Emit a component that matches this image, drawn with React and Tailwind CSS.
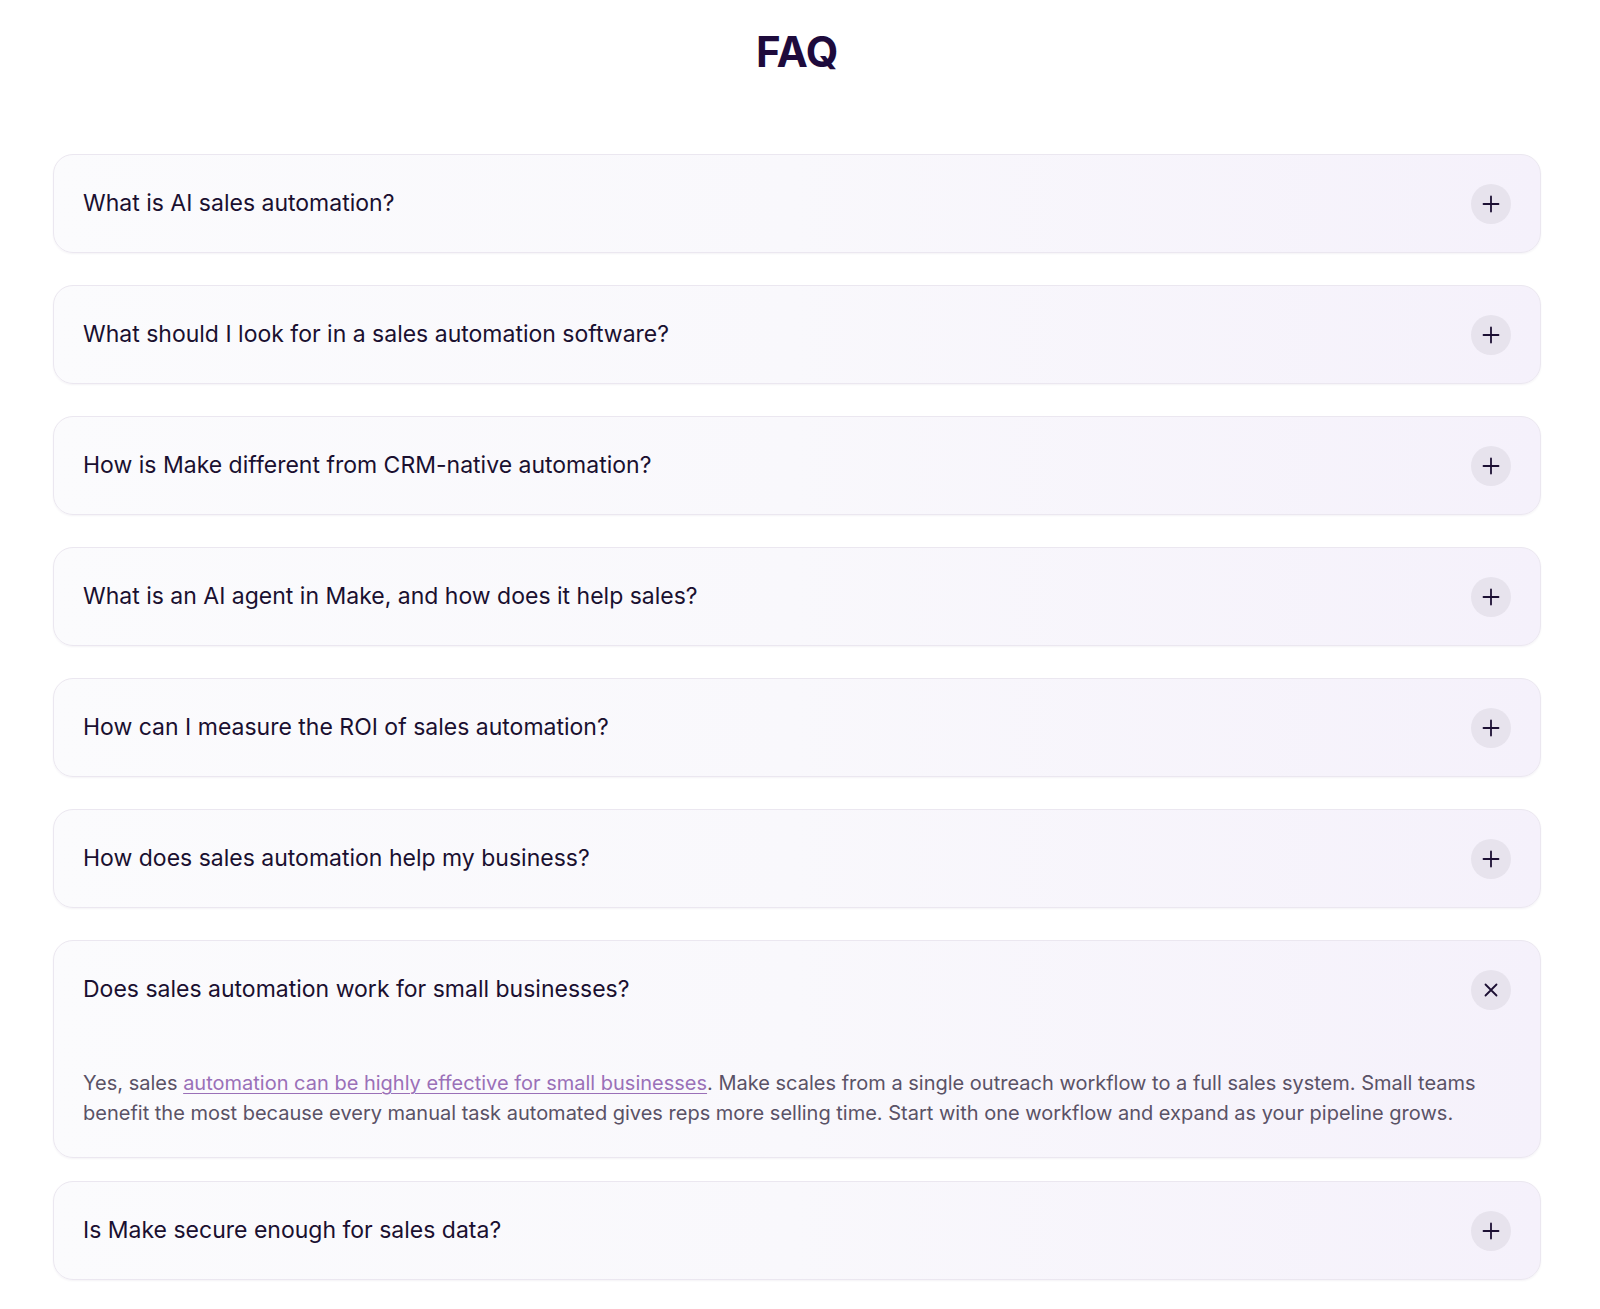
import React from "react";

const faqs = [
  { q: "What is AI sales automation?" },
  { q: "What should I look for in a sales automation software?" },
  { q: "How is Make different from CRM-native automation?" },
  { q: "What is an AI agent in Make, and how does it help sales?" },
  { q: "How can I measure the ROI of sales automation?" },
  { q: "How does sales automation help my business?" },
  { q: "Does sales automation work for small businesses?", open: true },
  { q: "Is Make secure enough for sales data?" },
];

function PlusIcon() {
  return (
    <svg width="18" height="18" viewBox="0 0 18 18" fill="none">
      <path d="M9 1.5V16.5M1.5 9H16.5" stroke="#1c0f33" strokeWidth="1.8" strokeLinecap="round" />
    </svg>
  );
}

function CloseIcon() {
  return (
    <svg width="14" height="14" viewBox="0 0 14 14" fill="none">
      <path d="M1.5 1.5L12.5 12.5M12.5 1.5L1.5 12.5" stroke="#1c0f33" strokeWidth="1.8" strokeLinecap="round" />
    </svg>
  );
}

function FaqItem({ q, open, className }) {
  return (
    <div
      className={
        "rounded-[20px] border border-[#ebe7f0] bg-gradient-to-r from-[#fbfbfd] via-[#f9f8fc] to-[#f5f1fb] shadow-[0_1px_2px_rgba(40,20,70,0.05)] " +
        (className || "")
      }
    >
      <div className="flex h-[97px] items-center justify-between px-[29px]">
        <span className="text-[23px] font-normal text-[#1a1030]">{q}</span>
        <span className="flex h-[40px] w-[40px] items-center justify-center rounded-full bg-[#e7e3ed]">
          {open ? <CloseIcon /> : <PlusIcon />}
        </span>
      </div>
      {open && (
        <p className="px-[29px] pb-[29px] pt-[30px] text-[20px] leading-[30px] text-[#5a5266]">
          Yes, sales{" "}
          <a href="#" className="text-[#9a70b8] underline decoration-1 underline-offset-[3px]">
            automation can be highly effective for small businesses
          </a>
          . Make scales from a single outreach workflow to a full sales system. Small teams
          benefit the most because every manual task automated gives reps more selling time.
          Start with one workflow and expand as your pipeline grows.
        </p>
      )}
    </div>
  );
}

export default function App() {
  return (
    <div
      className="min-h-[1309px] bg-white pt-[28px]"
      style={{ fontFamily: "Inter, 'Noto Sans', sans-serif" }}
    >
      <div className="ml-[53px] w-[1488px]">
        <h1 className="mb-[78px] text-center text-[42px] font-bold leading-[48px] tracking-[-0.01em] text-[#1e0b3c]">
          FAQ
        </h1>
        <div className="flex flex-col">
          {faqs.map((f, i) => (
            <FaqItem
              key={i}
              q={f.q}
              open={f.open}
              className={i === 0 ? "" : i === 7 ? "mt-[23px]" : "mt-[32px]"}
            />
          ))}
        </div>
      </div>
    </div>
  );
}
